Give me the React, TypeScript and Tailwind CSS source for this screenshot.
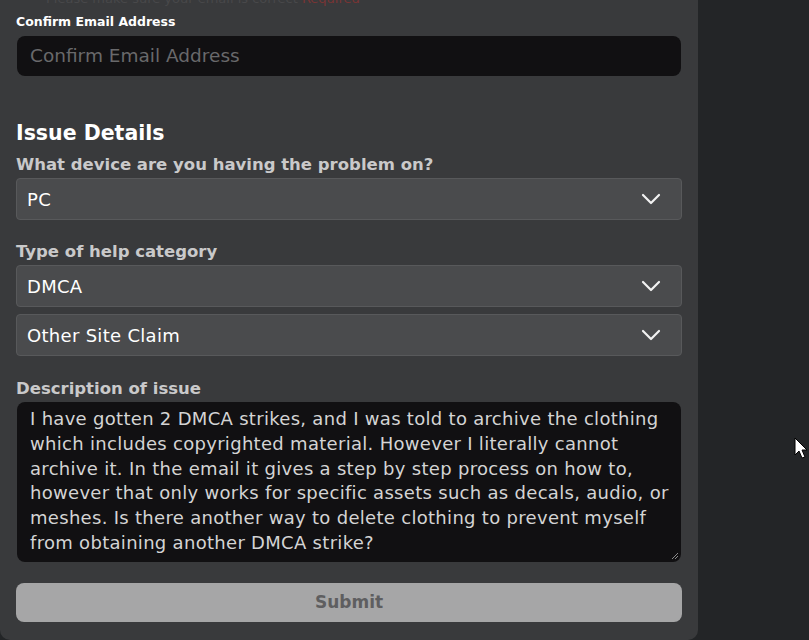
import React from 'react';

const font = { fontFamily: '"DejaVu Sans", "Liberation Sans", sans-serif' };

const Chevron: React.FC = () => (
    <svg width="20" height="12" viewBox="0 0 20 12" fill="none" className="shrink-0">
        <path d="M2 2l8 8 8-8" stroke="#f2f2f2" strokeWidth="2.2" strokeLinecap="round" strokeLinejoin="round" />
    </svg>
);

const Select: React.FC<{ value: string }> = ({ value }) => (
    <div className="flex items-center justify-between h-[42px] pl-[10px] pr-[20px] rounded-[4px] bg-[#4a4b4d] border border-[#58595b] text-[18px] tracking-[0.3px] text-white">
        <span>{value}</span>
        <Chevron />
    </div>
);

const Label: React.FC<{ children: React.ReactNode }> = ({ children }) => (
    <div className="text-[16.5px] font-semibold text-[#c9c9ca] leading-[22px] mb-[2px]">{children}</div>
);

const App: React.FC = () => {
    const description =
        'I have gotten 2 DMCA strikes, and I was told to archive the clothing which includes copyrighted material. However I literally cannot archive it. In the email it gives a step by step process on how to, however that only works for specific assets such as decals, audio, or meshes. Is there another way to delete clothing to prevent myself from obtaining another DMCA strike?';

    return (
        <div className="flex w-[809px] h-[640px] overflow-hidden bg-[#232527]" style={font}>
            <div className="w-[698px] h-[640px] shrink-0 bg-[#393a3c] rounded-b-[10px] pl-[16px] pr-[16px] overflow-hidden">
                <div className="mt-[-11px] h-[14px] text-[13px] text-[#48484a] pl-[30px] whitespace-nowrap">
                    Please make sure your email is correct <span className="text-[#7a3434]">Required</span>
                </div>

                <div className="mt-[10px] text-[12.5px] font-semibold text-white leading-[18px]">Confirm Email Address</div>
                <div className="mt-[5px] ml-[1px] mr-[1px] h-[40px] rounded-[8px] bg-[#111012] flex items-center pl-[13px] text-[18.5px] text-[#69696b]">
                    Confirm Email Address
                </div>

                <div className="mt-[44px] text-[20.5px] font-bold text-white leading-[26px]">Issue Details</div>
                <div className="mt-[8px]">
                    <Label>What device are you having the problem on?</Label>
                    <Select value="PC" />
                </div>

                <div className="mt-[21px]">
                    <Label>Type of help category</Label>
                    <Select value="DMCA" />
                    <div className="mt-[7px]">
                        <Select value="Other Site Claim" />
                    </div>
                </div>

                <div className="mt-[22px]">
                    <Label>Description of issue</Label>
                    <div className="relative ml-[1px] mr-[1px] h-[160px] rounded-[8px] bg-[#111012] pl-[13px] pr-[4px] pt-[5px] text-[18px] tracking-[0.3px] leading-[24.8px] text-[#d4d4d4]">
                        {description}
                        <svg className="absolute right-[2px] bottom-[2px]" width="8" height="8" viewBox="0 0 8 8">
                            <path d="M1 7L7 1M4 7L7 4" stroke="#8a8a8a" strokeWidth="1" />
                        </svg>
                    </div>
                </div>

                <div className="mt-[21px] h-[39px] rounded-[8px] bg-[#a6a6a7] flex items-center justify-center text-[17px] font-semibold text-[#5e5e60]">
                    Submit
                </div>
            </div>

            <div className="flex-1 relative">
                <svg className="absolute left-[96px] top-[437px]" width="14" height="22" viewBox="0 0 14 22">
                    <path d="M1 1v17l4-4 3 7 3-1-3-7h5z" fill="#fff" stroke="#000" strokeWidth="1" strokeLinejoin="round" />
                </svg>
            </div>
        </div>
    );
};

export default App;
